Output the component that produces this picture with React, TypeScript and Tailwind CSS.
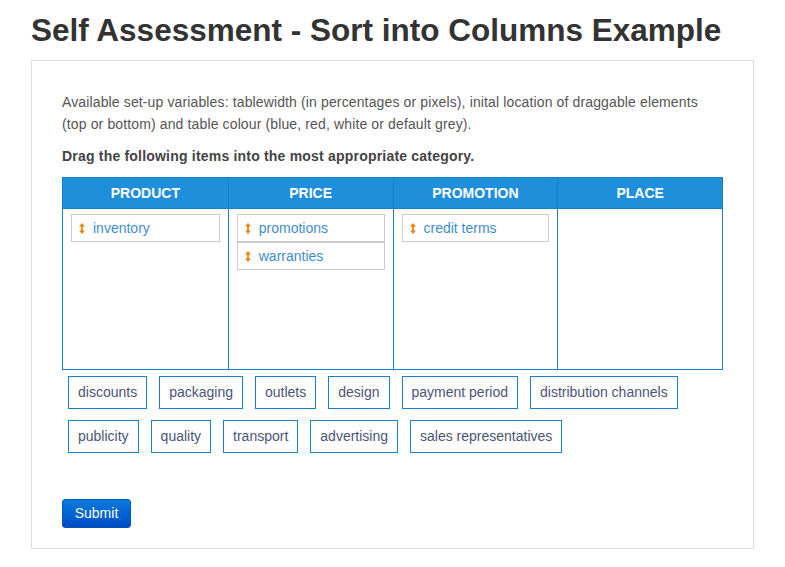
import React from 'react';

const columns = [
  { title: 'PRODUCT', items: ['inventory'] },
  { title: 'PRICE', items: ['promotions', 'warranties'] },
  { title: 'PROMOTION', items: ['credit terms'] },
  { title: 'PLACE', items: [] as string[] },
];

const pool = [
  'discounts',
  'packaging',
  'outlets',
  'design',
  'payment period',
  'distribution channels',
  'publicity',
  'quality',
  'transport',
  'advertising',
  'sales representatives',
];

function DragArrow() {
  return (
    <svg width="6" height="11" viewBox="0 0 6 11" className="shrink-0">
      <path d="M3 0 L6 3.5 L3.9 3.5 L3.9 7.5 L6 7.5 L3 11 L0 7.5 L2.1 7.5 L2.1 3.5 L0 3.5 Z" fill="#e8860c" />
    </svg>
  );
}

function PlacedItem({ label }: { label: string }) {
  return (
    <div className="flex h-[28px] items-center gap-[8px] border border-[#cccccc] bg-white pl-[7px] text-[14px] text-[#3f8ec9]">
      <DragArrow />
      <span>{label}</span>
    </div>
  );
}

export default function App() {
  return (
    <div className="min-h-screen bg-white px-[31px] pt-[12px] font-['Liberation_Sans',Arial,sans-serif] text-[#555555]">
      <h1 className="text-[31.5px] font-bold leading-[36px] text-[#333333]">
        Self Assessment - Sort into Columns Example
      </h1>

      <div className="mt-[12px] w-[723px] border border-[#dddddd] px-[30px] pb-[20px] pt-[30px]">
        <p className="text-[14px] leading-[22px] tracking-[0.13px] text-[#555555]">
          Available set-up variables: tablewidth (in percentages or pixels), inital location of draggable elements
          <br />
          (top or bottom) and table colour (blue, red, white or default grey).
        </p>
        <p className="mt-[11px] text-[14px] font-bold leading-[20px] tracking-[0.2px] text-[#444444]">
          Drag the following items into the most appropriate category.
        </p>

        {/* table */}
        <div className="mt-[11px] grid w-[661px] grid-cols-4 border border-[#1a7fc6]">
          {columns.map((c, i) => (
            <div
              key={c.title}
              className={`flex flex-col ${i > 0 ? 'border-l border-[#1a7fc6]' : ''}`}
            >
              <div className="flex h-[31px] items-center justify-center border-b border-[#1a7fc6] bg-[#1f8fdb] pt-px text-[14px] font-bold text-white">
                {c.title}
              </div>
              <div className="h-[160px] bg-white px-[8px] pt-[5px]">
                {c.items.map((it) => (
                  <PlacedItem key={it} label={it} />
                ))}
              </div>
            </div>
          ))}
        </div>

        {/* unsorted items */}
        <div className="mt-[6px] flex w-[661px] flex-wrap gap-x-[12px] gap-y-[11px] pl-[6px]">
          {pool.map((p) => (
            <div
              key={p}
              className="flex h-[33px] items-center border border-[#1a7fcc] bg-white px-[9px] text-[14px] text-[#4b5577]"
            >
              {p}
            </div>
          ))}
        </div>

        <button
          type="button"
          className="mt-[46px] flex h-[29px] w-[69px] items-center justify-center rounded-[3px] border border-[#0a56b8] bg-gradient-to-b from-[#0a7ade] to-[#004cc4] text-[14px] text-white"
        >
          Submit
        </button>
      </div>
    </div>
  );
}
